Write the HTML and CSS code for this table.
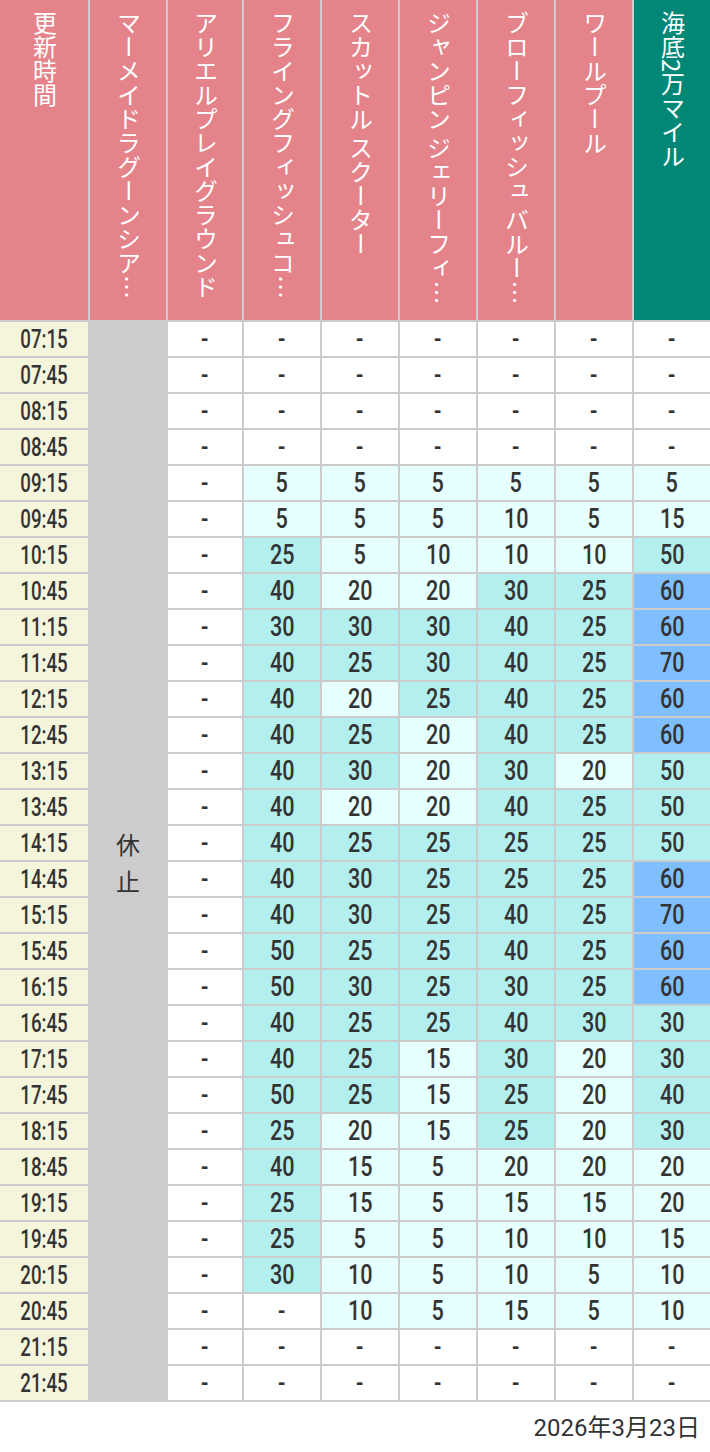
FILE: index.html
```html
<!DOCTYPE html>
<html lang="ja">
<head>
<meta charset="utf-8">
<title>待ち時間</title>
<link rel="stylesheet" href="styles.css">
</head>
<body>
<div class="table">
  <div class="hcell"><span class="htext">更新時間</span></div>
  <div class="hcell"><span class="htext">マーメイドラグーンシアター</span></div>
  <div class="hcell"><span class="htext">アリエルプレイグラウンド</span></div>
  <div class="hcell"><span class="htext">フライングフィッシュコースター</span></div>
  <div class="hcell"><span class="htext">スカットル スクーター</span></div>
  <div class="hcell"><span class="htext">ジャンピン ジェリーフィッシュ</span></div>
  <div class="hcell"><span class="htext">ブローフィッシュ バルーンレース</span></div>
  <div class="hcell"><span class="htext">ワールプール</span></div>
  <div class="hcell hcell-hl"><span class="htext">海底2万マイル</span></div>
  <div class="closed"><span>休<br>止</span></div>

  <div class="time"><span>07:15</span></div><div class="d"><span>-</span></div><div class="d"><span>-</span></div><div class="d"><span>-</span></div><div class="d"><span>-</span></div><div class="d"><span>-</span></div><div class="d"><span>-</span></div><div class="d"><span>-</span></div>
  <div class="time"><span>07:45</span></div><div class="d"><span>-</span></div><div class="d"><span>-</span></div><div class="d"><span>-</span></div><div class="d"><span>-</span></div><div class="d"><span>-</span></div><div class="d"><span>-</span></div><div class="d"><span>-</span></div>
  <div class="time"><span>08:15</span></div><div class="d"><span>-</span></div><div class="d"><span>-</span></div><div class="d"><span>-</span></div><div class="d"><span>-</span></div><div class="d"><span>-</span></div><div class="d"><span>-</span></div><div class="d"><span>-</span></div>
  <div class="time"><span>08:45</span></div><div class="d"><span>-</span></div><div class="d"><span>-</span></div><div class="d"><span>-</span></div><div class="d"><span>-</span></div><div class="d"><span>-</span></div><div class="d"><span>-</span></div><div class="d"><span>-</span></div>
  <div class="time"><span>09:15</span></div><div class="d"><span>-</span></div><div class="d l"><span>5</span></div><div class="d l"><span>5</span></div><div class="d l"><span>5</span></div><div class="d l"><span>5</span></div><div class="d l"><span>5</span></div><div class="d l"><span>5</span></div>
  <div class="time"><span>09:45</span></div><div class="d"><span>-</span></div><div class="d l"><span>5</span></div><div class="d l"><span>5</span></div><div class="d l"><span>5</span></div><div class="d l"><span>10</span></div><div class="d l"><span>5</span></div><div class="d l"><span>15</span></div>
  <div class="time"><span>10:15</span></div><div class="d"><span>-</span></div><div class="d t"><span>25</span></div><div class="d l"><span>5</span></div><div class="d l"><span>10</span></div><div class="d l"><span>10</span></div><div class="d l"><span>10</span></div><div class="d t"><span>50</span></div>
  <div class="time"><span>10:45</span></div><div class="d"><span>-</span></div><div class="d t"><span>40</span></div><div class="d l"><span>20</span></div><div class="d l"><span>20</span></div><div class="d t"><span>30</span></div><div class="d t"><span>25</span></div><div class="d b"><span>60</span></div>
  <div class="time"><span>11:15</span></div><div class="d"><span>-</span></div><div class="d t"><span>30</span></div><div class="d t"><span>30</span></div><div class="d t"><span>30</span></div><div class="d t"><span>40</span></div><div class="d t"><span>25</span></div><div class="d b"><span>60</span></div>
  <div class="time"><span>11:45</span></div><div class="d"><span>-</span></div><div class="d t"><span>40</span></div><div class="d t"><span>25</span></div><div class="d t"><span>30</span></div><div class="d t"><span>40</span></div><div class="d t"><span>25</span></div><div class="d b"><span>70</span></div>
  <div class="time"><span>12:15</span></div><div class="d"><span>-</span></div><div class="d t"><span>40</span></div><div class="d l"><span>20</span></div><div class="d t"><span>25</span></div><div class="d t"><span>40</span></div><div class="d t"><span>25</span></div><div class="d b"><span>60</span></div>
  <div class="time"><span>12:45</span></div><div class="d"><span>-</span></div><div class="d t"><span>40</span></div><div class="d t"><span>25</span></div><div class="d l"><span>20</span></div><div class="d t"><span>40</span></div><div class="d t"><span>25</span></div><div class="d b"><span>60</span></div>
  <div class="time"><span>13:15</span></div><div class="d"><span>-</span></div><div class="d t"><span>40</span></div><div class="d t"><span>30</span></div><div class="d l"><span>20</span></div><div class="d t"><span>30</span></div><div class="d l"><span>20</span></div><div class="d t"><span>50</span></div>
  <div class="time"><span>13:45</span></div><div class="d"><span>-</span></div><div class="d t"><span>40</span></div><div class="d l"><span>20</span></div><div class="d l"><span>20</span></div><div class="d t"><span>40</span></div><div class="d t"><span>25</span></div><div class="d t"><span>50</span></div>
  <div class="time"><span>14:15</span></div><div class="d"><span>-</span></div><div class="d t"><span>40</span></div><div class="d t"><span>25</span></div><div class="d t"><span>25</span></div><div class="d t"><span>25</span></div><div class="d t"><span>25</span></div><div class="d t"><span>50</span></div>
  <div class="time"><span>14:45</span></div><div class="d"><span>-</span></div><div class="d t"><span>40</span></div><div class="d t"><span>30</span></div><div class="d t"><span>25</span></div><div class="d t"><span>25</span></div><div class="d t"><span>25</span></div><div class="d b"><span>60</span></div>
  <div class="time"><span>15:15</span></div><div class="d"><span>-</span></div><div class="d t"><span>40</span></div><div class="d t"><span>30</span></div><div class="d t"><span>25</span></div><div class="d t"><span>40</span></div><div class="d t"><span>25</span></div><div class="d b"><span>70</span></div>
  <div class="time"><span>15:45</span></div><div class="d"><span>-</span></div><div class="d t"><span>50</span></div><div class="d t"><span>25</span></div><div class="d t"><span>25</span></div><div class="d t"><span>40</span></div><div class="d t"><span>25</span></div><div class="d b"><span>60</span></div>
  <div class="time"><span>16:15</span></div><div class="d"><span>-</span></div><div class="d t"><span>50</span></div><div class="d t"><span>30</span></div><div class="d t"><span>25</span></div><div class="d t"><span>30</span></div><div class="d t"><span>25</span></div><div class="d b"><span>60</span></div>
  <div class="time"><span>16:45</span></div><div class="d"><span>-</span></div><div class="d t"><span>40</span></div><div class="d t"><span>25</span></div><div class="d t"><span>25</span></div><div class="d t"><span>40</span></div><div class="d t"><span>30</span></div><div class="d t"><span>30</span></div>
  <div class="time"><span>17:15</span></div><div class="d"><span>-</span></div><div class="d t"><span>40</span></div><div class="d t"><span>25</span></div><div class="d l"><span>15</span></div><div class="d t"><span>30</span></div><div class="d l"><span>20</span></div><div class="d t"><span>30</span></div>
  <div class="time"><span>17:45</span></div><div class="d"><span>-</span></div><div class="d t"><span>50</span></div><div class="d t"><span>25</span></div><div class="d l"><span>15</span></div><div class="d t"><span>25</span></div><div class="d l"><span>20</span></div><div class="d t"><span>40</span></div>
  <div class="time"><span>18:15</span></div><div class="d"><span>-</span></div><div class="d t"><span>25</span></div><div class="d l"><span>20</span></div><div class="d l"><span>15</span></div><div class="d t"><span>25</span></div><div class="d l"><span>20</span></div><div class="d t"><span>30</span></div>
  <div class="time"><span>18:45</span></div><div class="d"><span>-</span></div><div class="d t"><span>40</span></div><div class="d l"><span>15</span></div><div class="d l"><span>5</span></div><div class="d l"><span>20</span></div><div class="d l"><span>20</span></div><div class="d l"><span>20</span></div>
  <div class="time"><span>19:15</span></div><div class="d"><span>-</span></div><div class="d t"><span>25</span></div><div class="d l"><span>15</span></div><div class="d l"><span>5</span></div><div class="d l"><span>15</span></div><div class="d l"><span>15</span></div><div class="d l"><span>20</span></div>
  <div class="time"><span>19:45</span></div><div class="d"><span>-</span></div><div class="d t"><span>25</span></div><div class="d l"><span>5</span></div><div class="d l"><span>5</span></div><div class="d l"><span>10</span></div><div class="d l"><span>10</span></div><div class="d l"><span>15</span></div>
  <div class="time"><span>20:15</span></div><div class="d"><span>-</span></div><div class="d t"><span>30</span></div><div class="d l"><span>10</span></div><div class="d l"><span>5</span></div><div class="d l"><span>10</span></div><div class="d l"><span>5</span></div><div class="d l"><span>10</span></div>
  <div class="time"><span>20:45</span></div><div class="d"><span>-</span></div><div class="d"><span>-</span></div><div class="d l"><span>10</span></div><div class="d l"><span>5</span></div><div class="d l"><span>15</span></div><div class="d l"><span>5</span></div><div class="d l"><span>10</span></div>
  <div class="time"><span>21:15</span></div><div class="d"><span>-</span></div><div class="d"><span>-</span></div><div class="d"><span>-</span></div><div class="d"><span>-</span></div><div class="d"><span>-</span></div><div class="d"><span>-</span></div><div class="d"><span>-</span></div>
  <div class="time"><span>21:45</span></div><div class="d"><span>-</span></div><div class="d"><span>-</span></div><div class="d"><span>-</span></div><div class="d"><span>-</span></div><div class="d"><span>-</span></div><div class="d"><span>-</span></div><div class="d"><span>-</span></div>
</div>
<div class="footer">2026年3月23日</div>
</body>
</html>
```
FILE: styles.css
```css
html, body {
  margin: 0;
  padding: 0;
  background: #ffffff;
}

body {
  width: 710px;
  font-family: "Noto Sans CJK JP", "Noto Sans", sans-serif;
  color: #333333;
}

.table {
  display: grid;
  grid-template-columns: 88px 76px 74px 76px 76px 76px 76px 76px 76px;
  grid-template-rows: 320px;
  grid-auto-rows: 34px;
  gap: 2px;
  padding-bottom: 2px;
  background: #cccccc;
}

.hcell {
  background: #e4838a;
  display: flex;
  justify-content: center;
  align-items: flex-start;
  padding-top: 11px;
}

.hcell-hl {
  background: #008776;
}

.htext {
  writing-mode: vertical-rl;
  white-space: nowrap;
  overflow: hidden;
  text-overflow: ellipsis;
  max-height: 300px;
  font-size: 24px;
  line-height: 1.2;
  color: #ffffff;
  font-family: "Noto Sans CJK JP", sans-serif;
}

.closed {
  grid-column: 2;
  grid-row: 2 / span 30;
  background: #cccccc;
  display: flex;
  align-items: center;
  justify-content: center;
  font-size: 24px;
  line-height: 37px;
  color: #333333;
  text-align: center;
  font-family: "Noto Sans CJK JP", sans-serif;
  padding-top: 2px;
}

.time,
.d {
  display: flex;
  align-items: center;
  justify-content: center;
  font-family: Roboto, "Liberation Sans", sans-serif;
  font-weight: 500;
  color: #333333;
  background: #ffffff;
}

.time span,
.d span {
  display: inline-block;
  line-height: 1;
}

.time {
  background: #f5f5dc;
  font-size: 26px;
}

.time span {
  transform: scaleX(0.72);
}

.d {
  font-size: 27px;
}

.d span {
  transform: scaleX(0.8);
}

.d.l {
  background: #e6ffff;
}

.d.t {
  background: #b3efef;
}

.d.b {
  background: #80bfff;
}

.footer {
  height: 50px;
  line-height: 52px;
  text-align: right;
  padding-right: 10px;
  font-size: 24px;
  font-family: Roboto, "Noto Sans CJK JP", sans-serif;
  color: #333333;
}
```
